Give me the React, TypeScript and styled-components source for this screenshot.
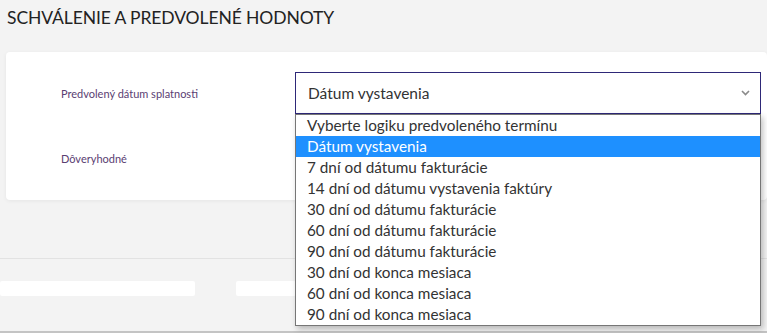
import React from 'react';
import styled, { createGlobalStyle } from 'styled-components';

const GlobalStyle = createGlobalStyle`
    html, body {
        margin: 0;
        padding: 0;
        background: #f3f3f3;
        font-family: Lato, "Open Sans", sans-serif;
        overflow: hidden;
    }
`;

const OPTIONS = [
    'Vyberte logiku predvoleného termínu',
    'Dátum vystavenia',
    '7 dní od dátumu fakturácie',
    '14 dní od dátumu vystavenia faktúry',
    '30 dní od dátumu fakturácie',
    '60 dní od dátumu fakturácie',
    '90 dní od dátumu fakturácie',
    '30 dní od konca mesiaca',
    '60 dní od konca mesiaca',
    '90 dní od konca mesiaca',
];

const Page = styled.div`
    width: 767px;
    height: 333px;
    display: flex;
    flex-direction: column;
    position: relative;
`;

const Title = styled.h2`
    margin: 0;
    padding: 7px 7px 0;
    height: 52px;
    box-sizing: border-box;
    font-size: 17.5px;
    font-weight: 400;
    color: #222;
    letter-spacing: -0.1px;
`;

const Card = styled.section`
    margin-left: 6px;
    background: #fff;
    border-radius: 4px;
    box-shadow: 0 1px 4px rgba(0, 0, 0, 0.06);
    padding: 20px 6px 0 55px;
    height: 148px;
    box-sizing: border-box;
    display: grid;
    grid-template-columns: 234px 466px;
    grid-auto-rows: 42px;
    row-gap: 23px;
`;

const Label = styled.div`
    display: flex;
    align-items: center;
    font-size: 11px;
    color: #5a3e72;
`;

const SelectWrap = styled.div`
    position: relative;
`;

const SelectBox = styled.div`
    height: 42px;
    box-sizing: border-box;
    border: 1px solid #2e2878;
    display: flex;
    align-items: center;
    justify-content: space-between;
    padding: 0 12px;
    font-size: 15.5px;
    color: #333;
`;

const Chevron = styled.svg`
    width: 9px;
    height: 6px;
    margin-right: -2px;
`;

const ListBox = styled.ul`
    position: absolute;
    top: 42px;
    left: 0;
    width: 466px;
    margin: 0;
    padding: 0;
    list-style: none;
    background: #fff;
    border: 1px solid #767676;
    box-sizing: border-box;
    box-shadow: 2px 3px 6px rgba(0, 0, 0, 0.25);
    z-index: 10;
`;

const Option = styled.li<{ $active?: boolean }>`
    height: 21px;
    line-height: 21px;
    padding-left: 11px;
    font-size: 15.3px;
    color: ${(p) => (p.$active ? '#fff' : '#333')};
    background: ${(p) => (p.$active ? '#1e90ff' : 'transparent')};
    white-space: nowrap;
`;

const Spacer = styled.div`
    height: 58px;
    border-bottom: 1px solid #e2e2e2;
`;

const Footer = styled.div`
    flex: 1;
    display: flex;
    align-items: flex-start;
    gap: 41px;
    padding-top: 22px;
    border-bottom: 2px solid #c4c4c4;
`;

const Blot = styled.div<{ $w: number }>`
    width: ${(p) => p.$w}px;
    height: 15px;
    background: #fff;
    border-radius: 2px;
`;

const App = () => {
    return (
        <>
            <GlobalStyle />
            <Page>
                <Title>SCHVÁLENIE A PREDVOLENÉ HODNOTY</Title>
                <Card>
                    <Label>Predvolený dátum splatnosti</Label>
                    <SelectWrap>
                        <SelectBox>
                            <span>Dátum vystavenia</span>
                            <Chevron viewBox="0 0 9 6">
                                <path d="M1 1 L4.5 4.5 L8 1" fill="none" stroke="#8a8a8a" strokeWidth="1.6" />
                            </Chevron>
                        </SelectBox>
                        <ListBox>
                            {OPTIONS.map((opt, i) => (
                                <Option key={opt} $active={i === 1}>
                                    {opt}
                                </Option>
                            ))}
                        </ListBox>
                    </SelectWrap>
                    <Label>Dôveryhodné</Label>
                </Card>
                <Spacer />
                <Footer>
                    <Blot $w={195} />
                    <Blot $w={60} />
                </Footer>
            </Page>
        </>
    );
};

export default App;
